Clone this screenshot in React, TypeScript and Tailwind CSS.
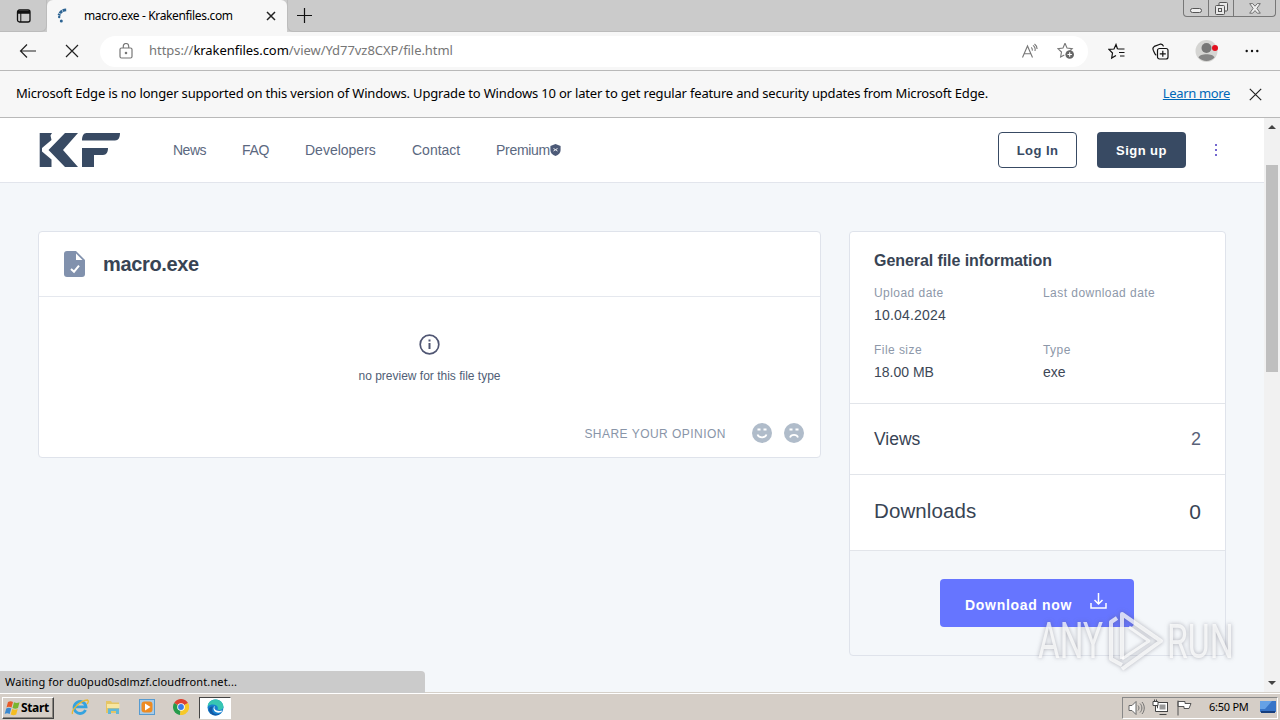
import type { ReactNode } from 'react';

const NAV_LINKS = [
  { label: 'News', className: 'w-[69px] tracking-[-0.5px]' },
  { label: 'FAQ', className: 'w-[63px] tracking-[-0.3px]' },
  { label: 'Developers', className: 'w-[107px]' },
  { label: 'Contact', className: 'w-[84px]' },
];

function TabStrip() {
  return (
    <div className="flex h-8 bg-[#cbcbcb]">
      <div className="flex w-[47px] items-center justify-center rounded-br-md border-r border-b border-[#bcbcbc]">
        <svg width="16" height="16" viewBox="0 0 16 16" fill="none" stroke="#111" className="ml-0.5">
          <rect x="1.5" y="2" width="12.5" height="12" rx="2" strokeWidth="1.3" />
          <path d="M1.5 3.5h12.5M1.5 5h12.5" strokeWidth="1.6" />
          <path d="M4.8 5v9" strokeWidth="1" />
        </svg>
      </div>
      <div className="flex w-[240px] items-center rounded-t-md bg-[#f7f7f7]">
        <svg width="16" height="16" viewBox="0 0 16 16" className="ml-[9px]" fill="#2d6493">
          <path d="M10.2 1.8C6.5 2 4 4 3 7.5" fill="none" stroke="#2d6493" strokeWidth="2.8" strokeDasharray="3.5 .6" />
          <circle cx="3.2" cy="9" r="1.2" />
          <circle cx="5.3" cy="13" r="1.5" />
        </svg>
        <span className="ml-3 w-[180px] text-[12px] tracking-[-0.35px] whitespace-nowrap text-black">
          macro.exe - Krakenfiles.com
        </span>
        <svg width="10" height="10" viewBox="0 0 10 10" stroke="#222" strokeWidth="1.5" className="ml-0.5">
          <path d="M1 1l8 8M9 1 1 9" />
        </svg>
      </div>
      <div className="flex flex-1 items-start justify-between rounded-bl-md border-b border-l border-[#bcbcbc]">
        <svg width="15" height="15" viewBox="0 0 15 15" stroke="#111" strokeWidth="1.2" className="mt-2 ml-[9px]">
          <path d="M7.5 0v15M0 7.5h15" />
        </svg>
        <div className="mr-1 flex h-[17px] w-[93px] rounded-b border border-t-0 border-[#777]">
          <div className="flex w-[25px] justify-center border-r border-[#777] pt-2">
            <div className="h-[5px] w-3 rounded-sm border border-[#555] bg-[#eee]" />
          </div>
          <div className="flex w-[25px] justify-center border-r border-[#777] pt-0.5">
            <svg width="13" height="13" viewBox="0 0 13 13" fill="#e8e8e8" stroke="#555">
              <rect x="4" y=".5" width="8.5" height="8.5" rx="1" />
              <rect x=".5" y="3.5" width="9" height="9" rx="1" />
              <rect x="3.5" y="6.5" width="3" height="3" />
            </svg>
          </div>
          <div className="flex flex-1 justify-center pt-[3px]">
            <svg width="12" height="11" viewBox="0 0 12 11" fill="#eee" stroke="#666" strokeWidth=".9">
              <path d="M.7.6h3L6 3.2 8.3.6h3L7.9 5.4l3.4 4.8h-3L6 7.6l-2.3 2.6h-3l3.4-4.8z" />
            </svg>
          </div>
        </div>
      </div>
    </div>
  );
}

function AddressBar() {
  return (
    <div className="flex h-[39px] items-center border-b border-[#b9b9b9] bg-[#f7f7f7]">
      <svg width="18" height="16" viewBox="0 0 18 16" fill="none" stroke="#222" strokeWidth="1.2" className="ml-[19px]">
        <path d="M8 1.5 1.5 8 8 14.5M1.5 8H17" />
      </svg>
      <svg width="14" height="14" viewBox="0 0 14 14" stroke="#222" strokeWidth="1.2" className="ml-7">
        <path d="M1 1l12 12M13 1 1 13" />
      </svg>
      <div className="ml-[21px] flex h-[31px] w-[988px] items-center rounded-full bg-white pr-[13px] pl-[19px]">
        <svg width="14" height="16" viewBox="0 0 14 16" fill="none" stroke="#777" strokeWidth="1.2">
          <rect x="1" y="5" width="12" height="10" rx="1.5" />
          <path d="M4.3 5V3.2a2.7 2.7 0 0 1 5.4 0V5" />
          <circle cx="7" cy="10" r=".7" fill="#777" />
        </svg>
        <span className="ml-4 flex-1 text-[13px] tracking-[-0.05px] whitespace-nowrap text-[#767676]">
          https://<span className="text-black">krakenfiles.com</span>/view/Yd77vz8CXP/file.html
        </span>
        <svg width="18" height="16" viewBox="0 0 18 16" fill="none" stroke="#777" strokeWidth="1.1">
          <path d="M1.5 14.5 6.5 3l5 11.5M3.3 10.7h6.4M10.3 4.3c1 .9 1.2 2 1 3.3M12 2.4c2 1.4 2.5 3.3 2 5.6M13.5 1c1.8 1.3 2.6 2.9 2.6 5" />
        </svg>
        <svg width="18" height="18" viewBox="0 0 18 18" fill="none" stroke="#777" strokeWidth="1.1" className="ml-[18px]">
          <path d="M8 1.3 10 6l5.2.6-2.4 2.3M7.3 13 3.6 15l.9-5L.9 6.6 6 6l2-4.7" />
          <circle cx="12.7" cy="12.5" r="4.3" fill="#666" stroke="none" />
          <path d="M12.7 10.3v4.4M10.5 12.5h4.4" stroke="#fff" />
        </svg>
      </div>
      <svg width="18" height="17" viewBox="0 0 18 17" fill="none" stroke="#111" strokeWidth="1.2" className="ml-5">
        <path d="M9.5 6h7M11 9.5h5.5M12 13h4.5M9.5 6 8 1.5 6 6 .9 6.4 4.5 10l-.8 5L8 12.4" />
      </svg>
      <svg width="17" height="17" viewBox="0 0 17 17" fill="none" stroke="#111" strokeWidth="1.2" className="ml-[26px]">
        <path d="M4.3 12.2C2.9 11.8 3 10.6 1.4 7.4.6 5.7 1 4.2 2.3 3.4L8 1.2c1.7-.5 2.9.2 3.5 2.2" />
        <rect x="5.5" y="5.5" width="10.5" height="10.5" rx="2" />
        <path d="M10.8 7.8v6M7.8 10.8h6" />
      </svg>
      <svg width="24" height="22" viewBox="0 0 24 22" className="ml-[26px]">
        <circle cx="11.5" cy="11" r="11" fill="#d5d5d3" />
        <circle cx="11.5" cy="8" r="5" fill="#777" />
        <path d="M3.5 17.5c1-4.5 15-4.5 16 0a11 11 0 0 1-16 0z" fill="#858585" />
        <circle cx="20" cy="8" r="3" fill="#e3101f" />
      </svg>
      <svg width="14" height="4" viewBox="0 0 14 4" fill="#111" className="ml-[26px]">
        <circle cx="1.7" cy="2" r="1.2" />
        <circle cx="7" cy="2" r="1.2" />
        <circle cx="12.3" cy="2" r="1.2" />
      </svg>
    </div>
  );
}

function SupportNotice() {
  return (
    <div className="flex h-[47px] items-center border-b border-[#b9b9b9] bg-[#f7f7f7] px-4 text-[13px] text-black">
      <span className="flex-1 tracking-[-0.175px] whitespace-nowrap">
        Microsoft Edge is no longer supported on this version of Windows. Upgrade to Windows 10 or later to get regular
        feature and security updates from Microsoft Edge.
      </span>
      <a className="tracking-[-0.35px] whitespace-nowrap text-[#0067b8] underline">Learn more</a>
      <svg width="13" height="13" viewBox="0 0 13 13" stroke="#222" strokeWidth="1.2" className="mr-0.5 ml-[19px]">
        <path d="M.8.8l11.4 11.4M12.2.8.8 12.2" />
      </svg>
    </div>
  );
}

function SiteHeader() {
  return (
    <header className="flex h-[65px] items-center border-b border-[#e2e5ec] bg-white">
      <svg width="82" height="34" viewBox="0 0 82 34" fill="#384a63" className="ml-[39px]">
        <path d="M.7 0H13l-1.5 2.5L12.5 7 3 15v3.5l9.5 8V34H.7zM26 0h13L24 17l15 17H26L9.5 17z" />
        <path d="M47.5 0H81c0 4.5-1.5 7.5-5 7.5H43C43 3 44.5 0 47.5 0zM43 15h26c0 4-1.5 7-5 7h-9v12H43z" />
      </svg>
      <nav className="ml-[52px] flex text-[14px] whitespace-nowrap text-[#5b6880]">
        {NAV_LINKS.map((link) => (
          <a key={link.label} className={link.className}>{link.label}</a>
        ))}
        <a className="flex items-center tracking-[-0.3px]">
          Premium
          <svg width="11" height="12" viewBox="0 0 11 12">
            <path d="M5.5 0 10.6 2v4c0 3-2 5-5.1 6C2.4 11 .4 9 .4 6V2z" fill="#4d5b78" />
            <path d="m3.5 4.5 2 1.2 2-1.2M3.5 7l2-1.3L7.5 7" stroke="#fff" strokeWidth=".9" fill="none" />
          </svg>
        </a>
      </nav>
      <div className="mr-[46px] ml-auto flex items-center text-[13px] font-bold tracking-[0.45px] whitespace-nowrap">
        <button className="h-9 w-[79px] rounded border border-[#384a63] pt-px text-[#384a63]">Log In</button>
        <button className="ml-5 h-9 w-[89px] rounded bg-[#384a63] pt-px text-white">Sign up</button>
        <svg width="4" height="14" viewBox="0 0 4 14" fill="#7468d0" className="ml-7">
          <path d="M1 1h2v2H1zM1 6h2v2H1zM1 11h2v2H1z" />
        </svg>
      </div>
    </header>
  );
}

function FileCard() {
  return (
    <section className="h-[227px] w-[783px] rounded border border-[#dfe3eb] bg-white">
      <div className="flex h-[65px] items-center border-b border-[#e5e8ee] pl-[25px]">
        <svg width="21" height="26" viewBox="0 0 21 26">
          <path d="M3 0h9l9 9v14a3 3 0 0 1-3 3H3a3 3 0 0 1-3-3V3a3 3 0 0 1 3-3z" fill="#8191ad" />
          <path d="M12 2.5V9h6.5z" fill="#fff" />
          <path d="m7 18 3 2.7 5-6" fill="none" stroke="#fff" strokeWidth="2" />
        </svg>
        <h1 className="ml-[18px] text-[20px] font-bold tracking-[-0.35px] text-[#384454]">macro.exe</h1>
      </div>
      <div className="flex h-[117px] flex-col items-center pt-[37px] text-[#505e76]">
        <svg width="21" height="21" viewBox="0 0 21 21" fill="none" stroke="#505673" strokeWidth="1.7">
          <circle cx="10.5" cy="10.5" r="9.3" />
          <path d="M10.5 9v6M10.5 5.5v2" strokeWidth="2" />
        </svg>
        <p className="mt-3 text-[12px] leading-[18px]">no preview for this file type</p>
      </div>
      <div className="flex h-[38px] items-center justify-end pr-4">
        <span className="mt-px mr-[26px] text-[12px] tracking-[0.47px] text-[#8995a8]">SHARE YOUR OPINION</span>
        <OpinionFace mouth="M5.5 11.5c1 3.7 8 3.7 9 0" />
        <OpinionFace mouth="M6 14.5c1-3.5 7-3.5 8 0" className="ml-3" />
      </div>
    </section>
  );
}

function OpinionFace({ mouth, className }: { mouth: string; className?: string }) {
  return (
    <svg width="20" height="20" viewBox="0 0 20 20" className={className}>
      <circle cx="10" cy="10" r="10" fill="#b0bcca" />
      <path d="M5.5 6.5h3M11.5 6.5h3" stroke="#fff" strokeWidth="2" />
      <path d={mouth} fill="none" stroke="#fff" strokeWidth="1.7" />
    </svg>
  );
}

function InfoField({ label, children }: { label: string; children?: ReactNode }) {
  return (
    <div>
      <div className="text-[12px] leading-[18px] tracking-[0.45px] text-[#8d98a9]">{label}</div>
      <div className="mt-[3px] h-5 text-[14px] leading-5 text-[#3d4756]">{children}</div>
    </div>
  );
}

function InfoCard() {
  return (
    <aside className="h-[425px] w-[377px] rounded border border-[#dfe3eb] text-[#384454]">
      <div className="h-[172px] rounded-t border-b border-[#e2e5ea] bg-white px-6 pt-[19px]">
        <h2 className="text-[16px] leading-5 font-bold tracking-[-0.07px]">General file information</h2>
        <div className="mt-[13px] grid grid-cols-[169px_1fr] gap-y-4">
          <InfoField label="Upload date"><span className="tracking-[0.2px]">10.04.2024</span></InfoField>
          <InfoField label="Last download date" />
          <InfoField label="File size">18.00 MB</InfoField>
          <InfoField label="Type">exe</InfoField>
        </div>
      </div>
      <div className="flex h-[71px] items-center justify-between border-b border-[#e2e5ea] bg-white px-6 text-[17.5px]">
        <span>Views</span>
        <span className="text-[18px] text-[#596278]">2</span>
      </div>
      <div className="flex h-[76px] items-center justify-between border-b border-[#e2e5ea] bg-white px-6 pb-0.5 text-[20.5px]">
        <span className="tracking-[0.1px]">Downloads</span>
        <span className="text-[21px]">0</span>
      </div>
      <button className="mt-7 ml-[90px] flex h-12 w-[194px] items-center rounded bg-[#6675ff] pl-[25px] text-[14px] font-bold tracking-[0.7px] whitespace-nowrap text-white">
        <span className="mt-1 w-[125px] text-left">Download now</span>
        <svg width="17" height="18" viewBox="0 0 17 18" fill="none" stroke="#fff" strokeWidth="1.5" className="-mt-1">
          <path d="M8.5 1v11M4.5 8l4 4 4-4M1 11v5h15v-5" />
        </svg>
      </button>
    </aside>
  );
}

function ScrollBar() {
  return (
    <div className="flex w-4 flex-col items-center bg-[#f1f1f1]">
      <svg width="8" height="4" viewBox="0 0 8 4" fill="#444" className="mt-[7px]">
        <path d="M0 4 4 0l4 4z" />
      </svg>
      <div className="mt-9 h-[207px] w-3 bg-[#bfbfbf]" />
      <svg width="8" height="4" viewBox="0 0 8 4" fill="#444" className="mt-auto mb-[7px]">
        <path d="M0 0h8L4 4z" />
      </svg>
    </div>
  );
}

function Watermark() {
  return (
    <svg
      width="240"
      height="74"
      viewBox="0 0 240 74"
      className="absolute top-[605px] left-[1034px] drop-shadow-[0_0_2px_rgba(90,90,105,0.6)]"
    >
      <g fill="#fff" fillOpacity=".75" fontFamily="Roboto, sans-serif" fontSize="49">
        <text transform="translate(4 53) scale(.68 1)">ANY</text>
        <text transform="translate(133 53) scale(.69 1)">RUN</text>
      </g>
      <g fill="none" stroke="#fff" strokeOpacity=".75" strokeWidth="4" strokeLinejoin="round">
        <path d="M88 54V9l39 27-39 28" />
        <path d="M95 22l20 14-27 18" strokeWidth="3" />
        <path d="M83 13l-6 4v37l11 6" />
      </g>
    </svg>
  );
}

function StartFlag() {
  return (
    <svg width="17" height="16" viewBox="0 0 17 16">
      <path d="M4 2c2-1 3.5-1 5 0L7.5 7.5c-2-1-3.5-1-5 0z" fill="#e75a29" />
      <path d="M10 2.3c2 1 3.5 1 5.5 0L14 8c-2 1-3.5 1-5.5 0z" fill="#79b52e" />
      <path d="M2.2 8.5c2-1 3.5-1 5 0L5.7 14c-2-1-3.5-1-5 0z" fill="#3b89d0" />
      <path d="M8.2 9c2 1 3.5 1 5.5 0l-1.5 5.5c-2 1-3.5 1-5.5 0z" fill="#f4bd21" />
    </svg>
  );
}

function TaskBar() {
  return (
    <div className="flex h-7 items-center border-t border-[#d5d0c9] bg-[#d5cec7] text-black shadow-[inset_0_1px_0_#fff]">
      <button className="mt-0.5 ml-0.5 flex h-[22px] w-[52px] items-center border border-t-white border-r-[#444] border-b-[#444] border-l-white pl-px text-[12px] font-bold tracking-[-0.35px] shadow-[inset_-1px_-1px_0_#8b8780]">
        <StartFlag />
        Start
      </button>
      <svg width="18" height="18" viewBox="0 0 18 18" fill="none" className="ml-[17px]">
        <path d="M14.5 12A6 6 0 1 1 15 8.8H4" stroke="#35a3df" strokeWidth="2.8" />
        <path d="M1.5 16C0 12 9 2.5 16.5 2c1.5 1 .5 3-.5 4" stroke="#e9b832" strokeWidth="1.3" />
      </svg>
      <svg width="16" height="16" viewBox="0 0 16 16" className="ml-4">
        <path d="M1 2h5l1 1.5h7V14H1z" fill="#e5c565" />
        <path d="M2 5h12.5v4H2z" fill="#f8e6a0" />
        <path d="M3 15V9.5h11V15h-3v-3H6v3z" fill="#62b8d8" />
      </svg>
      <svg width="16" height="16" viewBox="0 0 16 16" className="ml-[18px]">
        <rect x=".5" y=".5" width="15" height="15" fill="#a9cbe6" stroke="#579bd0" />
        <rect x="2.5" y="2.5" width="11" height="11" rx="3" fill="#ee8b22" />
        <path d="m6 4.5 5.5 3.5L6 11.5z" fill="#fff" />
      </svg>
      <svg width="16" height="16" viewBox="0 0 16 16" className="ml-[18px]">
        <path d="M8 8 1.1 4A8 8 0 0 1 15 4z" fill="#dd4332" />
        <path d="M8 8 7 16A8 8 0 0 1 1.1 4z" fill="#269b4b" />
        <path d="M8 8 15 4A8 8 0 0 1 7 16z" fill="#f7c928" />
        <circle cx="8" cy="8" r="3.8" fill="#fff" />
        <circle cx="8" cy="8" r="2.9" fill="#397de8" />
      </svg>
      <div className="mt-0.5 ml-[10px] flex h-[22px] w-[32px] items-center justify-center border border-t-[#444] border-r-white border-b-white border-l-[#444] bg-white">
        <svg width="17" height="17" viewBox="0 0 17 17">
          <circle cx="8.5" cy="8.5" r="8" fill="#1680cf" />
          <path d="M.6 7.5C1.5-2 16-1.5 16.5 8c-.5 3-4 3.5-6 2.5 2-4-5-7-9.9-3z" fill="#37c6b2" />
          <path d="M6 7.5C3 13 8 17 13.5 14.5 10 18 4 16.5 2 12c-1-2.5 1-5 4-4.5z" fill="#1558a3" />
          <path d="M8 7c-2 3 1 6 7.5 4.5-1.5 3-7 3-8.7-.5C6 9 7 7.5 8 7z" fill="#fff" />
        </svg>
      </div>
      <div className="mt-0.5 mr-0.5 ml-auto flex h-[22px] w-[156px] items-center border border-t-[#888] border-r-white border-b-white border-l-[#888]">
        <svg width="17" height="16" viewBox="0 0 17 16" fill="#fff" stroke="#666" className="ml-[5px]">
          <path d="M1 5.5h3l4-4v13l-4-4H1z" />
          <path d="M10 5.5c1.3 1.5 1.3 3.5 0 5M12 3.5c2.5 2.5 2.5 6.5 0 9M14 2c3 3.5 3 8.5 0 12" fill="none" strokeWidth=".9" />
        </svg>
        <svg width="17" height="17" viewBox="0 0 17 17" fill="#fff" stroke="#444" className="ml-[7px]">
          <rect x="5.5" y="3.5" width="10" height="9" />
          <path d="M7.5 5.5h6v5h-6z" fill="#999" stroke="none" />
          <path d="M7.5 15.5h7M1 2.5h5v4H1zM3.5 6.5v6H8" />
          <path d="M2.5.5v2M4.5.5v2" />
        </svg>
        <svg width="17" height="16" viewBox="0 0 17 16" fill="#fff" stroke="#555" className="ml-[7px]">
          <path d="M2 .5V15.5M2 1.5h7v2h6l-2 5H8v-2H2z" />
        </svg>
        <span className="ml-4 w-[51px] text-[11px] tracking-[-0.25px] whitespace-nowrap">6:50 PM</span>
        <svg width="16" height="13" viewBox="0 0 16 13">
          <path d="M0 0h16v11H0z" fill="#3875c8" />
          <path d="M0 0h12L5 8H0z" fill="#65a1e6" />
          <path d="M1 10h14v2H1z" fill="#173e7d" />
        </svg>
      </div>
    </div>
  );
}

export default function App() {
  return (
    <div className="relative flex h-[720px] w-[1280px] flex-col overflow-hidden font-['Noto_Sans',sans-serif]">
      <TabStrip />
      <AddressBar />
      <SupportNotice />
      <div className="flex min-h-0 flex-1">
        <div className="flex-1 bg-[#f4f7fa] font-['Liberation_Sans',Arial,sans-serif]">
          <SiteHeader />
          <main className="mt-12 ml-[38px] flex items-start gap-7">
            <FileCard />
            <InfoCard />
          </main>
        </div>
        <ScrollBar />
      </div>
      <TaskBar />
      {/* Page load status, shown over the bottom edge of the page */}
      <div className="absolute top-[671px] left-0 flex h-[22px] w-[425px] items-center rounded-tr bg-[#cbcbcb] pl-[5px] text-[11px] tracking-[0.14px] text-black">
        Waiting for du0pud0sdlmzf.cloudfront.net...
      </div>
      <Watermark />
    </div>
  );
}
